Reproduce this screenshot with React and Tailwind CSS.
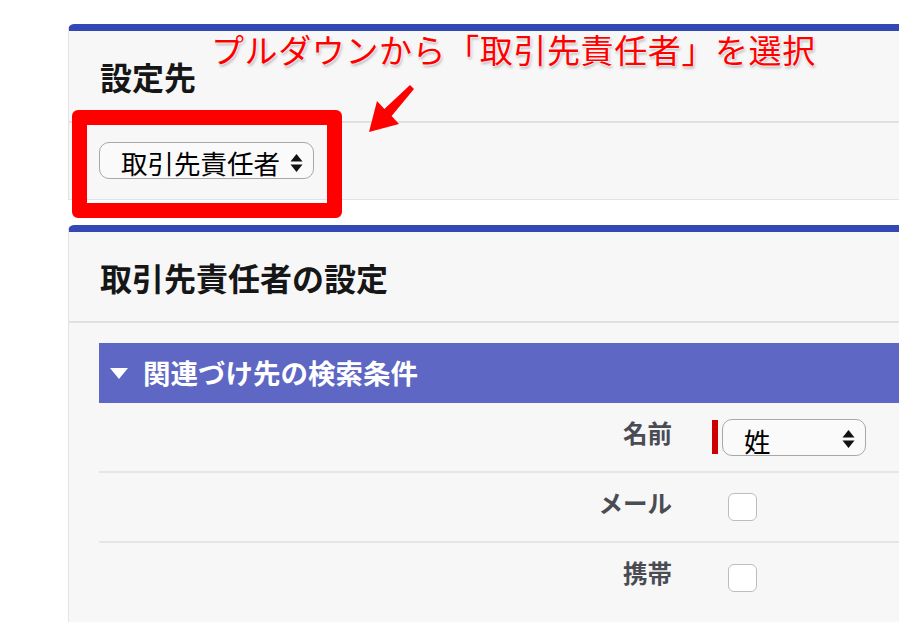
const jp = "font-['Noto_Sans_CJK_JP','Noto_Sans',sans-serif]";

function UpDown() {
  return (
    <svg width="13" height="20" viewBox="0 0 13 20" className="shrink-0">
      <polygon points="6.5,1 12.5,8.5 0.5,8.5" fill="#111" />
      <polygon points="0.5,11.5 12.5,11.5 6.5,19" fill="#111" />
    </svg>
  );
}

function FakeSelect({ label, width, pad }) {
  return (
    <div
      className={`flex h-[37px] items-start justify-between rounded-[10px] border-[1.5px] border-[#a8a8a8] bg-[#fafafa] pl-[21px] pr-[10px] ${width}`}
    >
      <span className={`text-[26.5px] leading-none text-black ${pad}`}>{label}</span>
      <div className="self-center pt-[4px]">
        <UpDown />
      </div>
    </div>
  );
}

function Checkbox() {
  return <div className="ml-[16px] h-[28px] w-[29px] rounded-[6px] border-[1.5px] border-[#bdbdbd] bg-white" />;
}

function Row({ label, children, last }) {
  return (
    <div className={`flex items-center gap-x-[40px] ${last ? "h-[69px]" : "h-[70px] border-b-2 border-[#e6e6e6]"}`}>
      <div className="w-[573px] pb-[8px] text-right text-[24.5px] font-bold text-[#4a4b53]">{label}</div>
      <div className="flex items-center">{children}</div>
    </div>
  );
}

export default function App() {
  return (
    <div className={`relative h-[622px] w-[899px] overflow-hidden bg-white ${jp}`}>
      <div className="pl-[68px] pt-[24px]">
        {/* 設定先 */}
        <section className="rounded-tl-[6px] border-b border-l border-t-[7px] border-[#e3e3e3] border-t-[#3347b5] bg-[#f7f7f7]">
          <div className="flex h-[90px] items-center pl-[31px]">
            <h2 className="text-[32px] font-bold leading-none text-[#161616]">設定先</h2>
          </div>
          <div className="h-[78px] border-t-2 border-[#e0e0e0] pl-[30px] pt-[19px]">
            <FakeSelect label="取引先責任者" width="w-[215px]" pad="pt-[7px]" />
          </div>
        </section>

        {/* 取引先責任者の設定 */}
        <section className="mt-[25px] h-[400px] rounded-tl-[6px] border-l border-t-[7px] border-[#e3e3e3] border-t-[#3347b5] bg-[#f7f7f7]">
          <div className="flex h-[89px] items-center pl-[31px]">
            <h2 className="text-[32px] font-bold leading-none text-[#161616]">取引先責任者の設定</h2>
          </div>
          <div className="border-t-2 border-[#e0e0e0] pl-[30px] pt-[20px]">
            <div className="flex h-[60px] items-center gap-[15px] bg-[#5e67c3] pl-[11px]">
              <svg width="18" height="11" viewBox="0 0 18 11">
                <polygon points="0,0 18,0 9,11" fill="#fff" />
              </svg>
              <span className="text-[27.5px] font-bold leading-none text-white">関連づけ先の検索条件</span>
            </div>
            <Row label="名前">
              <div className="h-[34px] w-[6px] bg-[#cc0000]" />
              <div className="ml-[4px]">
                <FakeSelect label="姓" width="w-[144px]" pad="pt-[8px]" />
              </div>
            </Row>
            <Row label="メール">
              <Checkbox />
            </Row>
            <Row label="携帯" last>
              <Checkbox />
            </Row>
          </div>
        </section>
      </div>

      {/* annotation overlay */}
      <div className="absolute left-[72px] top-[110px] h-[108px] w-[270px] rounded-[6px] border-[15px] border-[#ff0000]" />
      <svg className="absolute left-[360px] top-[80px]" width="60" height="60" viewBox="0 0 60 60">
        <polygon points="9,52 39,44 31.6,36 54,9 50,5 24.4,29 17,21" fill="#ff0000" />
      </svg>
      <div className="absolute left-[211px] top-[33px] whitespace-nowrap text-[33px] leading-none tracking-[0.6px] text-[#ff0000] [text-shadow:0_0_2px_#fff,0_0_2px_#fff,0_0_3px_#fff,1px_2px_3px_rgba(0,0,0,0.35)]">
        プルダウンから「取引先責任者」を選択
      </div>
    </div>
  );
}
